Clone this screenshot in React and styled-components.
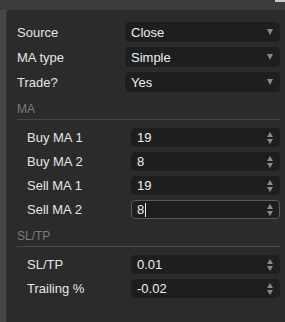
import React from 'react'
import styled, { createGlobalStyle } from 'styled-components'

const Global = createGlobalStyle`
  html, body { margin: 0; padding: 0; background: #3b3b3b; }
  body { font-family: "Liberation Sans", Arial, sans-serif; }
`

const Page = styled.div`
  width: 285px;
  height: 322px;
  display: flex;
  flex-direction: column;
  background: #3b3b3b;
  overflow: hidden;
`

const TopBar = styled.div`
  height: 10px;
  position: relative;
  flex: none;
`

const Grip = styled.div`
  position: absolute;
  left: 7px;
  top: 0;
  width: 3px;
  height: 5px;
  background-image: radial-gradient(#9a9a9a 0.6px, transparent 0.7px);
  background-size: 2px 2px;
`

const Corner = styled.div`
  position: absolute;
  right: 0;
  top: 0;
  width: 10px;
  height: 2px;
  background: #c8c8c8;
`

const Body = styled.div`
  flex: 1;
  display: flex;
`

const Strip = styled.div`
  width: 6px;
  background: #474747;
  border-right: 1px solid #333;
`

const Panel = styled.div`
  flex: 1;
  background: #2b2b2b;
  border-top-left-radius: 4px;
  padding: 12px 5px 0 10px;
  display: flex;
  flex-direction: column;
`

const Row = styled.div`
  display: flex;
  align-items: center;
  height: ${p => (p.$select ? 20 : 19)}px;
  margin-bottom: 5px;
  padding-left: ${p => (p.$indent ? 10 : 0)}px;
`

const Label = styled.div`
  width: ${p => (p.$indent ? 104 : 108)}px;
  color: #e6e6e6;
  font-size: 13px;
`

const Field = styled.div`
  flex: 1;
  height: 100%;
  box-sizing: border-box;
  background: #1e1e1e;
  border: 1px solid ${p => (p.$focus ? '#5a5a5a' : '#1e1e1e')};
  border-radius: 4px;
  display: flex;
  align-items: center;
  padding: 0 6px 0 5px;
  color: #f0f0f0;
  font-size: 13px;
`

const Value = styled.span`
  flex: 1;
`

const Caret = styled.span`
  display: inline-block;
  width: 1px;
  height: 14px;
  background: #f0f0f0;
  vertical-align: middle;
  margin-left: 1px;
`

const Arrow = styled.span`
  width: 0;
  height: 0;
  border-left: 3.5px solid transparent;
  border-right: 3.5px solid transparent;
  border-top: 6px solid #8a8a8a;
`

const Spin = styled.span`
  display: flex;
  flex-direction: column;
  gap: 2px;
  align-items: center;
`

const Tri = styled.span`
  width: 0;
  height: 0;
  border-left: 3.5px solid transparent;
  border-right: 3.5px solid transparent;
  ${p => (p.$up ? 'border-bottom' : 'border-top')}: 5px solid #8a8a8a;
`

const Section = styled.div`
  color: #7c7c7c;
  font-size: 12px;
  line-height: 14px;
  padding: 5px 0 3px;
  border-bottom: 1px solid #474747;
  margin-bottom: 8px;
`

const SelectRow = ({ label, value }) => (
  <Row $select>
    <Label>{label}</Label>
    <Field>
      <Value>{value}</Value>
      <Arrow />
    </Field>
  </Row>
)

const NumRow = ({ label, value, focus }) => (
  <Row $indent>
    <Label $indent>{label}</Label>
    <Field $focus={focus}>
      <Value>
        {value}
        {focus && <Caret />}
      </Value>
      <Spin>
        <Tri $up />
        <Tri />
      </Spin>
    </Field>
  </Row>
)

export default function App() {
  return (
    <Page>
      <Global />
      <TopBar>
        <Grip />
        <Corner />
      </TopBar>
      <Body>
        <Strip />
        <Panel>
          <SelectRow label="Source" value="Close" />
          <SelectRow label="MA type" value="Simple" />
          <SelectRow label="Trade?" value="Yes" />
          <Section>MA</Section>
          <NumRow label="Buy MA 1" value="19" />
          <NumRow label="Buy MA 2" value="8" />
          <NumRow label="Sell MA 1" value="19" />
          <NumRow label="Sell MA 2" value="8" focus />
          <Section>SL/TP</Section>
          <NumRow label="SL/TP" value="0.01" />
          <NumRow label="Trailing %" value="-0.02" />
        </Panel>
      </Body>
    </Page>
  )
}
